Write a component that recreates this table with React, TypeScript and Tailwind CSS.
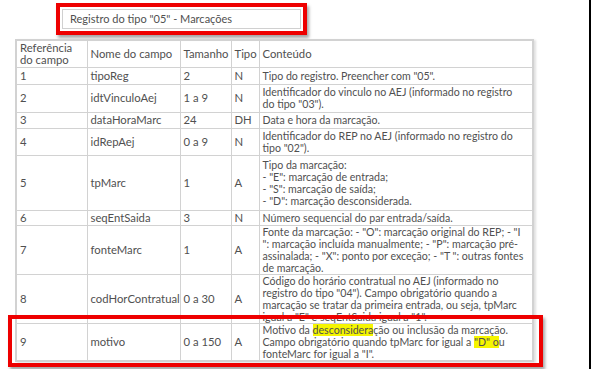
const rows: { ref: string; nome: string; tam: string; tipo: string; h: string; conteudo: React.ReactNode }[] = [
  { ref: "1", nome: "tipoReg", tam: "2", tipo: "N", h: "h-[17px]", conteudo: <>Tipo do registro. Preencher com "05".</> },
  {
    ref: "2", nome: "idtVinculoAej", tam: "1 a 9", tipo: "N", h: "h-[28px]",
    conteudo: <>Identificador do vinculo no AEJ (informado no registro<br />do tipo "03").</>,
  },
  { ref: "3", nome: "dataHoraMarc", tam: "24", tipo: "DH", h: "h-[16px]", conteudo: <>Data e hora da marcação.</> },
  {
    ref: "4", nome: "idRepAej", tam: "0 a 9", tipo: "N", h: "h-[27px]",
    conteudo: <>Identificador do REP no AEJ (informado no registro do<br />tipo "02").</>,
  },
  {
    ref: "5", nome: "tpMarc", tam: "1", tipo: "A", h: "h-[55px]",
    conteudo: (
      <>
        Tipo da marcação:<br />- "E": marcação de entrada;<br />- "S": marcação de saída;<br />- "D": marcação desconsiderada.
      </>
    ),
  },
  { ref: "6", nome: "seqEntSaida", tam: "3", tipo: "N", h: "h-[15px]", conteudo: <>Número sequencial do par entrada/saída.</> },
  {
    ref: "7", nome: "fonteMarc", tam: "1", tipo: "A", h: "h-[49px]",
    conteudo: (
      <>
        Fonte da marcação: - "O": marcação original do REP; - "I<br />": marcação incluída manualmente; - "P": marcação pré-
        <br />assinalada; - "X": ponto por exceção; - "T ": outras fontes<br />de marcação.
      </>
    ),
  },
  {
    ref: "8", nome: "codHorContratual", tam: "0 a 30", tipo: "A", h: "h-[48px]",
    conteudo: (
      <>
        Código do horário contratual no AEJ (informado no<br />registro do tipo "04"). Campo obrigatório quando a
        <br />marcação se tratar da primeira entrada, ou seja, tpMarc<br />igual a "E" e seqEntSaida igual a "1".
      </>
    ),
  },
  {
    ref: "9", nome: "motivo", tam: "0 a 150", tipo: "A", h: "h-[37px]",
    conteudo: (
      <>
        Motivo da <mark className="bg-[#f5f500] text-[#505050]">desconsidera</mark>ção ou inclusão da marcação.
        <br />Campo obrigatório quando tpMarc for igual a <mark className="bg-[#f5f500] text-[#505050]">"D" o</mark>u
        <br />fonteMarc for igual a "I".
      </>
    ),
  },
];

export default function App() {
  return (
    <div className="flex w-[593px] h-[369px] bg-white overflow-hidden text-[#505050] font-['Lato',sans-serif] text-[11.3px] leading-[12px]">
      <div className="relative w-[589px] h-full">
        {/* título */}
        <div className="ml-[56px] mt-[3px] w-[251px] h-[32px] border-4 border-[#ee0000] shadow-[2px_3px_3px_rgba(0,0,0,0.35)] p-[2px]">
          <div className="h-full border border-[#d0d0d0] flex items-center pl-[7px] text-[11px]">
            Registro do tipo "05" - Marcações
          </div>
        </div>

        {/* tabela */}
        <table className="table-fixed ml-[15px] mt-[4px] w-[519px] border-collapse border-2 border-[#d2d2d2] shadow-[2px_1px_2px_rgba(0,0,0,0.12)]">
          <colgroup>
            <col className="w-[71px]" />
            <col className="w-[93px]" />
            <col className="w-[51px]" />
            <col className="w-[28px]" />
            <col />
          </colgroup>
          <thead>
            <tr className="h-[27px]">
              <td className="border border-[#d2d2d2] px-[3px]">Referência<br />do campo</td>
              <td className="border border-[#d2d2d2] px-[3px]">Nome do campo</td>
              <td className="border border-[#d2d2d2] px-[3px] whitespace-nowrap">Tamanho</td>
              <td className="border border-[#d2d2d2] px-[3px]">Tipo</td>
              <td className="border border-[#d2d2d2] px-[3px]">Conteúdo</td>
            </tr>
          </thead>
          <tbody>
            {rows.map((r) => (
              <tr key={r.ref} className={r.h}>
                <td className="border border-[#d2d2d2] px-[3px] py-0">{r.ref}</td>
                <td className="border border-[#d2d2d2] px-[3px] py-0 whitespace-nowrap">{r.nome}</td>
                <td className="border border-[#d2d2d2] px-[3px] py-0">{r.tam}</td>
                <td className="border border-[#d2d2d2] px-[3px] py-0">{r.tipo}</td>
                <td className="border border-[#d2d2d2] px-[3px] py-0 whitespace-nowrap text-[10.6px]">{r.conteudo}</td>
              </tr>
            ))}
          </tbody>
        </table>

        {/* destaque da linha 9 */}
        <div className="absolute left-[8px] top-[315px] w-[535px] h-[52px] border-4 border-[#ee0000] shadow-[2px_3px_3px_rgba(0,0,0,0.35)]" />
      </div>
      <div className="w-[2px] h-full bg-black" />
    </div>
  );
}
